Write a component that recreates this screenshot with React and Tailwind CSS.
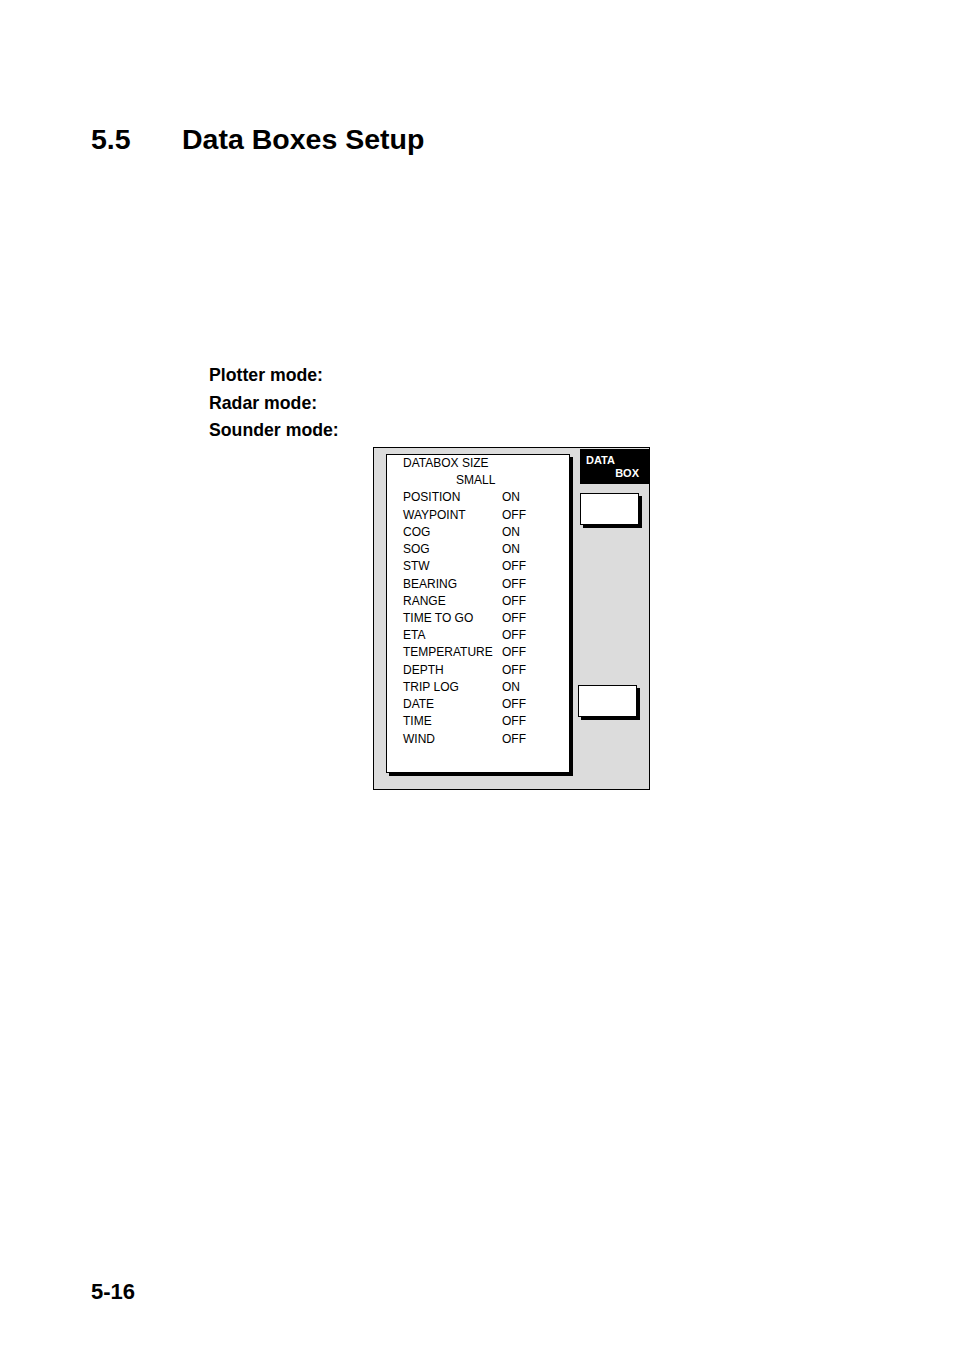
import React from 'react';

const rows = [
  ['POSITION', 'ON'],
  ['WAYPOINT', 'OFF'],
  ['COG', 'ON'],
  ['SOG', 'ON'],
  ['STW', 'OFF'],
  ['BEARING', 'OFF'],
  ['RANGE', 'OFF'],
  ['TIME TO GO', 'OFF'],
  ['ETA', 'OFF'],
  ['TEMPERATURE', 'OFF'],
  ['DEPTH', 'OFF'],
  ['TRIP LOG', 'ON'],
  ['DATE', 'OFF'],
  ['TIME', 'OFF'],
  ['WIND', 'OFF'],
];

const SoftKey = ({ className }) => (
  <div
    className={`w-[59px] h-[32px] bg-white border border-black shadow-[3px_3px_0_#000] ${className}`}
  />
);

const App = () => {
  return (
    <div
      className="w-[954px] h-[1351px] bg-white text-black flex flex-col"
      style={{ fontFamily: '"Liberation Sans", Arial, sans-serif' }}
    >
      {/* heading */}
      <h1 className="pt-[122px] pl-[91px] flex text-[28.5px] leading-[34px] font-bold">
        <span className="w-[91px]">5.5</span>
        <span>Data Boxes Setup</span>
      </h1>

      {/* mode labels */}
      <div className="mt-[206px] pl-[209px] text-[17.7px] leading-[27.5px] font-bold">
        <p>Plotter mode:</p>
        <p>Radar mode:</p>
        <p>Sounder mode:</p>
      </div>

      {/* screen */}
      <div className="mt-[2.5px] ml-[373px] w-[277px] h-[343px] border border-black bg-[#dcdcdc] flex items-start">
        <div className="ml-[12px] mt-[6px] w-[184px] h-[319px] bg-white border border-black shadow-[3px_3px_0_#000] pl-[16px] text-[12px] leading-[17.22px]">
          <p>DATABOX SIZE</p>
          <p className="pl-[53px]">SMALL</p>
          {rows.map(([name, value]) => (
            <div key={name} className="flex">
              <span className="w-[99px]">{name}</span>
              <span>{value}</span>
            </div>
          ))}
        </div>

        <div className="ml-[10px] mt-[1px] flex flex-col w-[69px]">
          <div className="h-[35px] bg-black text-white text-[11px] leading-[13px] font-bold pt-[5px] pl-[6px] pr-[10px]">
            <p>DATA</p>
            <p className="text-right">BOX</p>
          </div>
          <SoftKey className="mt-[9px]" />
          <SoftKey className="mt-[160px] -ml-[2px]" />
        </div>
      </div>

      {/* page number */}
      <div className="mt-auto mb-[46px] pl-[91px] text-[22px] leading-[26px] font-bold">
        5-16
      </div>
    </div>
  );
};

export default App;
